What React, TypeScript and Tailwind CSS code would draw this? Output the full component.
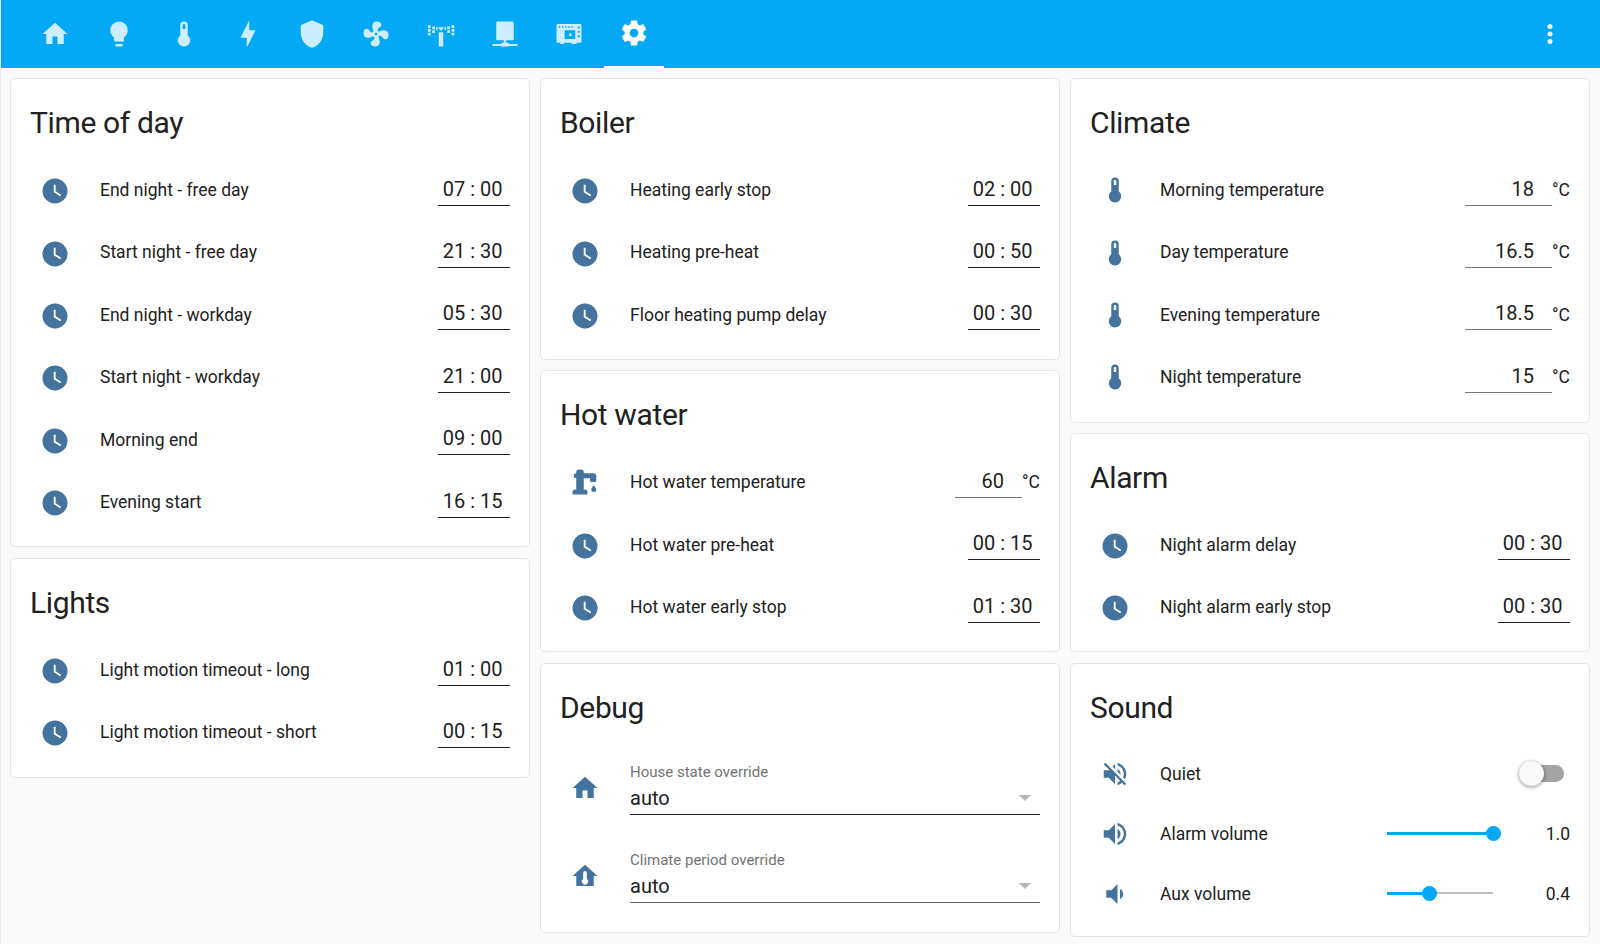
import React from 'react';

const mdi = {
  home: 'M10,20V14H14V20H19V12H22L12,3L2,12H5V20H10Z',
  bulb: 'M12,2A7,7 0 0,0 5,9C5,11.38 6.19,13.47 8,14.74V17A1,1 0 0,0 9,18H15A1,1 0 0,0 16,17V14.74C17.81,13.47 19,11.38 19,9A7,7 0 0,0 12,2M9,21A1,1 0 0,0 10,22H14A1,1 0 0,0 15,21V20H9V21Z',
  thermometer: 'M15 13V5A3 3 0 0 0 9 5V13A5 5 0 1 0 15 13M12 4A1 1 0 0 1 13 5V8H11V5A1 1 0 0 1 12 4Z',
  bolt: 'M11 15H6L13 1V9H18L11 23V15Z',
  shield: 'M12,1L3,5V11C3,16.55 6.84,21.74 12,23C17.16,21.74 21,16.55 21,11V5L12,1Z',
  fan: 'M12,11A1,1 0 0,0 11,12A1,1 0 0,0 12,13A1,1 0 0,0 13,12A1,1 0 0,0 12,11M12.5,2C17,2 17.11,5.57 14.75,6.75C13.76,7.24 13.32,8.29 13.13,9.22C13.61,9.42 14.03,9.73 14.35,10.13C18.05,8.13 22.03,8.92 22.03,12.5C22.03,17 18.46,17.1 17.28,14.73C16.78,13.74 15.72,13.3 14.79,13.11C14.59,13.59 14.28,14 13.88,14.34C15.87,18.03 15.08,22 11.5,22C7,22 6.91,18.42 9.27,17.24C10.25,16.75 10.69,15.71 10.89,14.79C10.4,14.59 9.97,14.27 9.65,13.87C5.96,15.85 2,15.07 2,11.5C2,7 5.56,6.89 6.74,9.26C7.24,10.25 8.29,10.68 9.22,10.87C9.41,10.39 9.73,9.97 10.14,9.65C8.15,5.96 8.94,2 12.5,2Z',
  sprinkler: 'M10.2 10.5H13.8V22H10.2ZM9.5 6.5H14.5L12 9.5ZM1.5 5H3.7V7.2H1.5ZM1.5 8H3.7V10.2H1.5ZM1.5 11H3.7V13.2H1.5ZM5 6H7.2V8.2H5ZM5 9H7.2V11.2H5ZM8 6.5H9.2V8.7H8ZM14.8 6.5H16V8.7H14.8ZM17 6H19.2V8.2H17ZM17 9H19.2V11.2H17ZM20.5 5H22.7V7.2H20.5ZM20.5 8H22.7V10.2H20.5ZM20.5 11H22.7V13.2H20.5Z',
  network: 'M6 2H18A1 1 0 0 1 19 3V16A1 1 0 0 1 18 17H13V19H15V20H22V21.5H15V22H9V21.5H2V20H9V19H11V17H6A1 1 0 0 1 5 16V3A1 1 0 0 1 6 2Z',
  board: 'M3 4H21A1 1 0 0 1 22 5V18A1 1 0 0 1 21 19H18V20H14V19H8V20H5V19H3A1 1 0 0 1 2 18V5A1 1 0 0 1 3 4ZM4 5.5V7H5V5.5ZM6.5 5.5V7H7.5V5.5ZM9 5.5V7H10V5.5ZM11.5 5.5V7H12.5V5.5ZM14 5.5V7H15V5.5ZM19 6V7.5H20.5V6ZM19 9.5V11H20.5V9.5ZM19 13V14.5H20.5V13ZM8.5 9V16H17V9ZM12 11.5H14V13.5H12Z',
  cog: 'M12,15.5A3.5,3.5 0 0,1 8.5,12A3.5,3.5 0 0,1 12,8.5A3.5,3.5 0 0,1 15.5,12A3.5,3.5 0 0,1 12,15.5M19.43,12.97C19.47,12.65 19.5,12.33 19.5,12C19.5,11.67 19.47,11.34 19.43,11L21.54,9.37C21.73,9.22 21.78,8.95 21.66,8.73L19.66,5.27C19.54,5.05 19.27,4.96 19.05,5.05L16.56,6.05C16.04,5.66 15.5,5.32 14.87,5.07L14.5,2.42C14.46,2.18 14.25,2 14,2H10C9.75,2 9.54,2.18 9.5,2.42L9.13,5.07C8.5,5.32 7.96,5.66 7.44,6.05L4.95,5.05C4.73,4.96 4.46,5.05 4.34,5.27L2.34,8.73C2.21,8.95 2.27,9.22 2.46,9.37L4.57,11C4.53,11.34 4.5,11.67 4.5,12C4.5,12.33 4.53,12.65 4.57,12.97L2.46,14.63C2.27,14.78 2.21,15.05 2.34,15.27L4.34,18.73C4.46,18.95 4.73,19.03 4.95,18.95L7.44,17.94C7.96,18.34 8.5,18.68 9.13,18.93L9.5,21.58C9.54,21.82 9.75,22 10,22H14C14.25,22 14.46,21.82 14.5,21.58L14.87,18.93C15.5,18.67 16.04,18.34 16.56,17.94L19.05,18.95C19.27,19.03 19.54,18.95 19.66,18.73L21.66,15.27C21.78,15.05 21.73,14.78 21.54,14.63L19.43,12.97Z',
  dots: 'M12,16A2,2 0 0,1 14,18A2,2 0 0,1 12,20A2,2 0 0,1 10,18A2,2 0 0,1 12,16M12,10A2,2 0 0,1 14,12A2,2 0 0,1 12,14A2,2 0 0,1 10,12A2,2 0 0,1 12,10M12,4A2,2 0 0,1 14,6A2,2 0 0,1 12,8A2,2 0 0,1 10,6A2,2 0 0,1 12,4Z',
  clock: 'M12,2A10,10 0 0,0 2,12A10,10 0 0,0 12,22A10,10 0 0,0 22,12A10,10 0 0,0 12,2M16.2,16.2L11,13V7H12.5V12.2L17,14.9L16.2,16.2Z',
  pump: 'M19,14.5C19,14.5 21,16.67 21,18A2,2 0 0,1 19,20A2,2 0 0,1 17,18C17,16.67 19,14.5 19,14.5M5,18V9A2,2 0 0,1 3,7A2,2 0 0,1 5,5V4A2,2 0 0,1 7,2H9A2,2 0 0,1 11,4V5H19A2,2 0 0,1 21,7V9L21,11A1,1 0 0,1 20,12H17A1,1 0 0,1 16,11V9H11V18H12A2,2 0 0,1 14,20V22H2V20A2,2 0 0,1 4,18H5Z',
  homeTemp: 'M12 3L2 12H5V20H19V12H22L12 3ZM12 8A1.5 1.5 0 0 1 13.5 9.5V14.3A2.5 2.5 0 1 1 10.5 14.3V9.5A1.5 1.5 0 0 1 12 8Z',
  mute: 'M12,4L9.91,6.09L12,8.18M4.27,3L3,4.27L7.73,9H3V15H7L12,20V13.27L16.25,17.53C15.58,18.04 14.83,18.46 14,18.7V20.77C15.38,20.45 16.63,19.82 17.68,18.96L19.73,21L21,19.73L12,10.73M19,12C19,12.94 18.8,13.82 18.46,14.64L19.97,16.15C20.62,14.91 21,13.5 21,12C21,7.72 18,4.14 14,3.23V5.29C16.89,6.15 19,8.83 19,12M16.5,12C16.5,10.23 15.5,8.71 14,7.97V10.18L16.45,12.63C16.5,12.43 16.5,12.21 16.5,12Z',
  volHigh: 'M14,3.23V5.29C16.89,6.15 19,8.83 19,12C19,15.17 16.89,17.84 14,18.7V20.77C18,19.86 21,16.28 21,12C21,7.72 18,4.14 14,3.23M16.5,12C16.5,10.23 15.5,8.71 14,7.97V16C15.5,15.29 16.5,13.76 16.5,12M3,9V15H7L12,20V4L7,9H3Z',
  volMed: 'M5,9V15H9L14,20V4L9,9M18.5,12C18.5,10.23 17.5,8.71 16,7.97V16C17.5,15.29 18.5,13.76 18.5,12Z',
};

const Icon = ({ d, className }: { d: string; className?: string }) => (
  <svg viewBox="0 0 24 24" className={`h-[30px] w-[30px] fill-current ${className ?? ''}`}>
    <path d={d} fillRule="evenodd" />
  </svg>
);

const RowIcon = ({ d, low }: { d: string; low?: boolean }) => (
  <div className={`mr-[20px] flex w-[50px] shrink-0 justify-center text-[#44739e] ${low ? 'pt-[2px]' : ''}`}>
    <Icon d={d} />
  </div>
);

const Card = ({ title, tall, children }: { title: string; tall?: boolean; children: React.ReactNode }) => (
  <div className={`rounded-[5px] border border-[#e5e5e5] bg-white px-[19px] ${tall ? 'pb-[12px]' : 'pb-[13px]'}`}>
    <h2 className="flex h-[80px] items-center pt-[7px] text-[30px] font-normal tracking-[-0.012em] text-[#212121]">{title}</h2>
    {children}
  </div>
);

// time row: 07 : 00 with a black underline
const TimeRow = ({ label, time }: { label: string; time: string }) => (
  <div className="flex h-[62.4px] items-center">
    <RowIcon d={mdi.clock} low />
    <div className="flex-1 text-[17.5px]">{label}</div>
    <div className="mb-[1px] w-[72px] border-b border-[#212121] pb-[1px] pr-[7.5px] text-right text-[20px] leading-[30px]">
      {time}
    </div>
  </div>
);

const NumRow = ({ icon, label, value, wide }: { icon: string; label: string; value: string; wide?: boolean }) => (
  <div className="flex h-[62.4px] items-center">
    <RowIcon d={icon} />
    <div className="flex-1 text-[17.5px]">{label}</div>
    <div className={`mb-[1px] border-b border-[#757575] pb-[1px] pr-[18px] text-right text-[20px] leading-[30px] ${wide ? 'w-[87px]' : 'w-[67px]'}`}>
      {value}
    </div>
    <div className="w-[18px] text-right text-[17.5px]">°C</div>
  </div>
);

const SelectRow = ({ icon, label, dark }: { icon: string; label: string; dark?: boolean }) => (
  <div className="flex h-[88px] items-center">
    <RowIcon d={icon} />
    <div className={`flex-1 border-b pt-[2px] ${dark ? 'border-[#212121]' : 'border-[#616161]'}`}>
      <div className="text-[15px] leading-[18px] text-[#737373]">{label}</div>
      <div className="flex h-[33px] items-center justify-between pr-[9px]">
        <span className="text-[20px]">auto</span>
        <span className="h-0 w-0 border-x-[6px] border-t-[6px] border-x-transparent border-t-[#b5b5b5]" />
      </div>
    </div>
  </div>
);

const SliderRow = ({ icon, label, value, pct }: { icon: string; label: string; value: string; pct: number }) => (
  <div className="flex h-[60px] items-center">
    <RowIcon d={icon} />
    <div className="flex-1 text-[17.5px]">{label}</div>
    <div className="relative mb-[2px] h-[2px] w-[106px] bg-[#bdbdbd]">
      <div className="h-[3px] bg-[#03a9f4]" style={{ width: `${pct}%` }} />
      <div
        className="absolute top-[-6px] ml-[-7.5px] h-[15px] w-[15px] rounded-full bg-[#03a9f4]"
        style={{ left: `${pct}%` }}
      />
    </div>
    <div className="w-[77px] text-right text-[17.5px]">{value}</div>
  </div>
);

const tabs = [mdi.home, mdi.bulb, mdi.thermometer, mdi.bolt, mdi.shield, mdi.fan, mdi.sprinkler, mdi.network, mdi.board];

export default function App() {
  return (
    <div className="h-[944px] overflow-hidden border-l border-[#ededed] bg-[#fafafa] font-['Roboto',sans-serif] text-[#212121]">
      <header className="flex h-[68px] items-stretch bg-[#03a9f4] pl-[24px] pr-[35px]">
        <nav className="flex flex-1 gap-[4.3px]">
          {tabs.map((d, i) => (
            <div key={i} className="flex w-[60px] items-center justify-center text-[#cdeeff]">
              <Icon d={d} />
            </div>
          ))}
          <div className="flex w-[60px] items-center justify-center border-b-2 border-white text-white">
            <Icon d={mdi.cog} />
          </div>
        </nav>
        <div className="flex items-center text-white">
          <Icon d={mdi.dots} />
        </div>
      </header>
      <main className="flex gap-[10px] pl-[9px] pt-[10px]">
        <div className="flex w-[520px] flex-col gap-[10.5px]">
          <Card title="Time of day">
            <TimeRow label="End night - free day" time="07 : 00" />
            <TimeRow label="Start night - free day" time="21 : 30" />
            <TimeRow label="End night - workday" time="05 : 30" />
            <TimeRow label="Start night - workday" time="21 : 00" />
            <TimeRow label="Morning end" time="09 : 00" />
            <TimeRow label="Evening start" time="16 : 15" />
          </Card>
          <Card title="Lights">
            <TimeRow label="Light motion timeout - long" time="01 : 00" />
            <TimeRow label="Light motion timeout - short" time="00 : 15" />
          </Card>
        </div>
        <div className="flex w-[520px] flex-col gap-[10px]">
          <Card title="Boiler">
            <TimeRow label="Heating early stop" time="02 : 00" />
            <TimeRow label="Heating pre-heat" time="00 : 50" />
            <TimeRow label="Floor heating pump delay" time="00 : 30" />
          </Card>
          <Card title="Hot water">
            <NumRow icon={mdi.pump} label="Hot water temperature" value="60" />
            <TimeRow label="Hot water pre-heat" time="00 : 15" />
            <TimeRow label="Hot water early stop" time="01 : 30" />
          </Card>
          <div className="pt-[1px]">
            <Card title="Debug" tall>
              <SelectRow icon={mdi.home} label="House state override" dark />
              <SelectRow icon={mdi.homeTemp} label="Climate period override" />
            </Card>
          </div>
        </div>
        <div className="flex w-[520px] flex-col gap-[10px]">
          <Card title="Climate">
            <NumRow icon={mdi.thermometer} label="Morning temperature" value="18" wide />
            <NumRow icon={mdi.thermometer} label="Day temperature" value="16.5" wide />
            <NumRow icon={mdi.thermometer} label="Evening temperature" value="18.5" wide />
            <NumRow icon={mdi.thermometer} label="Night temperature" value="15" wide />
          </Card>
          <Card title="Alarm">
            <TimeRow label="Night alarm delay" time="00 : 30" />
            <TimeRow label="Night alarm early stop" time="00 : 30" />
          </Card>
          <div className="pt-[1px]">
            <Card title="Sound" tall>
              <div className="flex h-[60px] items-center">
                <RowIcon d={mdi.mute} />
                <div className="flex-1 text-[17.5px]">Quiet</div>
                <div className="relative mb-[2px] mr-[6px] h-[17px] w-[45px] rounded-full bg-[#a3a3a3]">
                  <div className="absolute left-0 top-[-4px] h-[25px] w-[25px] rounded-full bg-[#fafafa] shadow-[0_1px_4px_rgba(0,0,0,0.45)]" />
                </div>
              </div>
              <SliderRow icon={mdi.volHigh} label="Alarm volume" value="1.0" pct={100} />
              <SliderRow icon={mdi.volMed} label="Aux volume" value="0.4" pct={40} />
            </Card>
          </div>
        </div>
      </main>
    </div>
  );
}
